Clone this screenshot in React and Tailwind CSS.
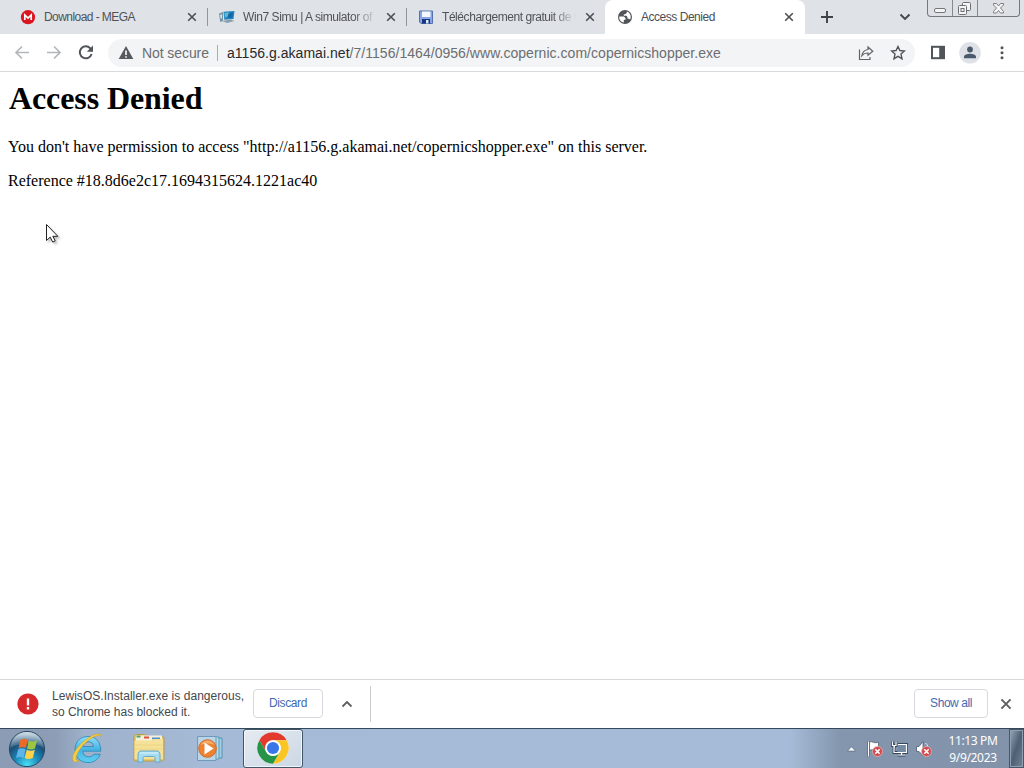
import React from "react";

const ui = "font-['Liberation_Sans',Arial,sans-serif]";

function Close({ size = 10, color = "#4c4f53", w = 1.6 }) {
  return (
    <svg width={size} height={size} viewBox="0 0 10 10" fill="none" stroke={color} strokeWidth={w} className="shrink-0">
      <path d="M1.200 1.200 8.800 8.800M8.800 1.200 1.200 8.800" />
    </svg>
  );
}

function MegaIcon() {
  return (
    <svg width="16" height="16" viewBox="0 0 16 16" className="shrink-0">
      <circle cx="8" cy="8.200" r="7.100" fill="#d9151f" />
      <path d="M4.800 11V6L8 9l3.200-3v5" fill="none" stroke="#fff" strokeWidth="1.700" />
    </svg>
  );
}

function SimuIcon() {
  return (
    <svg width="16" height="16" viewBox="0 0 16 16" className="shrink-0">
      <path d="M0 4.500 4 3v9l-2.800 1z" fill="#7895a8" />
      <path d="m1 6 2-.7v4l-1.200.5z" fill="#d0e1e8" />
      <path d="m4.500 2.800 11-.8-1 8-9.200.8z" fill="#2384bd" />
      <path d="m5.500 3.800 4-.3c2 2-1 4-3.700 5.200z" fill="#5cbad6" />
      <path d="m9 5 5-2-.7 5.600-4 .5z" fill="#1768a8" />
      <path d="m3 12 8.500-1.500 4 1.600L8 14z" fill="#8aa0ac" />
    </svg>
  );
}

function FloppyIcon() {
  return (
    <svg width="16" height="16" viewBox="0 0 16 16" className="shrink-0">
      <path d="M1.500 2h13v12.500H3L1.500 13z" fill="#86a6e6" stroke="#5571ae" />
      <path d="M4 2.500h8.500V8H4z" fill="#f3f6fb" />
      <path d="M4 10h8v4.500H4z" fill="#16377e" />
      <path d="M8 11h2.500v3.500H8z" fill="#dae8ff" />
    </svg>
  );
}

function GlobeIcon() {
  return (
    <svg width="16" height="16" viewBox="0 0 16 16" className="shrink-0">
      <circle cx="8" cy="8" r="7" fill="#515458" />
      <path d="M2.300 7.500h4.500l1.700 1.600v1.700H6.800v2.700C4 13 1.700 10.500 2.300 7.500zM9.800 2.400v1.400L8.300 5.200H6.800v1.600H9.500l1 1.500v1.500h1.800l.8 1c1.500-3.400.3-7.300-3.300-8.400z" fill="#fff" />
    </svg>
  );
}

function Tab({ icon, title, spacing, fade, sep }) {
  return (
    <div className="flex h-full w-[199px] shrink-0 items-center pl-[11px]">
      {icon}
      <div className={"ml-2 w-[134px] whitespace-nowrap text-[12px] leading-[16px] text-[#505357] " + spacing + (fade ? " [mask-image:linear-gradient(to_right,black_82%,transparent)]" : "")}>
        {title}
      </div>
      <div className="ml-auto mr-[10px] flex"><Close /></div>
      <div className={"h-[18px] w-px " + (sep ? "bg-[#91969c]" : "bg-transparent")} />
    </div>
  );
}

function WindowButtons() {
  return (
    <div className="ml-[16px] flex h-[17px] w-[93px] self-start rounded-b-[4px] border border-t-0 border-[#747980] bg-[#dde1e5]">
      <div className="flex w-[25px] justify-center border-r border-[#858a90]">
        <svg width="24" height="16" viewBox="0 0 24 16"><rect x="6.500" y="8.500" width="11" height="4" rx="1.500" fill="#f4f4f5" stroke="#73777c" /></svg>
      </div>
      <div className="flex w-[25px] justify-center border-r border-[#858a90]">
        <svg width="24" height="16" viewBox="0 0 24 16" fill="#f4f4f5" stroke="#6c7075">
          <rect x="9.500" y="2.500" width="8" height="8" rx="1" />
          <rect x="5.500" y="5.500" width="8" height="9" rx="1" />
          <rect x="8" y="8.500" width="3" height="3" />
        </svg>
      </div>
      <div className="flex flex-1 justify-center">
        <svg width="40" height="16" viewBox="0 0 40 16">
          <path d="M14.500 3.500h3l2 2.500 2-2.500h3v1.500L21.500 8l3 3.500v1.500h-3l-2-2.500-2 2.500h-3v-1.500l3-3.500-3-3z" fill="#f4f4f5" stroke="#7b7f84" />
        </svg>
      </div>
    </div>
  );
}

function TabStrip() {
  return (
    <div className="flex h-[34px] shrink-0 items-center bg-[#dfe2e6]">
      <div className="flex h-full w-[605px] shrink-0 items-center pl-[9px]">
        <Tab icon={<MegaIcon />} title="Download - MEGA" spacing="tracking-[-0.56px]" sep />
        <Tab icon={<SimuIcon />} title="Win7 Simu | A simulator of" spacing="tracking-[-0.42px]" fade sep />
        <Tab icon={<FloppyIcon />} title="Téléchargement gratuit de C" spacing="tracking-[-0.44px]" fade />
      </div>
      <div className="flex h-full w-[200px] shrink-0 items-center rounded-t-[8px] bg-white pl-[12px] pr-[11px]">
        <GlobeIcon />
        <div className="ml-2 text-[12px] leading-[16px] tracking-[-0.47px] text-[#4c4f53]">Access Denied</div>
        <div className="ml-auto flex"><Close /></div>
      </div>
      <div className="flex h-full flex-1 items-center pl-[15px]">
        <svg width="14" height="14" viewBox="0 0 14 14" stroke="#3e4145" strokeWidth="1.900"><path d="M7 1v12M1 7h12" /></svg>
        <svg width="12" height="8" viewBox="0 0 12 8" className="ml-auto" fill="none" stroke="#44474b" strokeWidth="1.900"><path d="m1.500 1.500 4.500 4.500 4.500-4.500" /></svg>
        <WindowButtons />
        <div className="w-[4px]" />
      </div>
    </div>
  );
}

function Toolbar() {
  return (
    <div className="flex h-[38px] shrink-0 items-center border-b border-[#d8dadc] bg-white pl-[14px] text-[#5a5d61]">
      <svg width="16" height="16" viewBox="0 0 16 16" fill="none" stroke="#b4b6b9" strokeWidth="1.700"><path d="M15 7.500H2M8 1.500 2 7.500l6 6" /></svg>
      <svg width="16" height="16" viewBox="0 0 16 16" className="ml-4" fill="none" stroke="#b4b6b9" strokeWidth="1.700"><path d="M1 7.500h13M8 1.500l6 6-6 6" /></svg>
      <svg width="16" height="16" viewBox="0 0 16 16" className="ml-4" fill="none" stroke="#515458" strokeWidth="2"><path d="M13.600 9A6 6 0 1 1 12.300 3.300L14 5" /><path d="M15 .5v6.200H8.800z" fill="#515458" stroke="none" /></svg>
      <div className="ml-[14px] flex h-[28px] w-[807px] items-center rounded-full bg-[#f3f4f5] pl-[10px] pr-[9px]">
        <svg width="16" height="16" viewBox="0 0 16 16"><path d="M8 1 15.300 14H.7z" fill="#56595d" /><path d="M7.200 5.500h1.600V10H7.200zM7.200 11.200h1.600v1.500H7.200z" fill="#fff" /></svg>
        <span className="ml-[8px] w-[68px] whitespace-nowrap pt-px text-[14px] leading-[18px] tracking-[-0.08px] text-[#6a6d71]">Not secure</span>
        <div className="ml-[7px] h-[16px] w-px bg-[#a9acb0]" />
        <span className="ml-[9px] whitespace-nowrap pt-px text-[14px] leading-[18px] tracking-[0.035px] text-[#6b6e72]"><span className="text-[#282a2d]">a1156.g.akamai.net</span>/7/1156/1464/0956/www.copernic.com/copernicshopper.exe</span>
        <svg width="16" height="16" viewBox="0 0 16 16" className="ml-auto" fill="none" stroke="#606367" strokeWidth="1.200">
          <path d="M1.500 4.500v10H12V12" /><path d="M10 2 14.800 6.200 10 10.300V8C7.200 7.900 5.300 8.800 3.900 10.500 4.500 7 6.500 4.900 10 4.500z" />
        </svg>
        <svg width="16" height="16" viewBox="0 0 16 16" className="ml-4" fill="none" stroke="#515458" strokeWidth="1.400"><path d="m8 1.500 1.900 4 4.600.5L11 9.100l1 4.600-4-2.400-4 2.400 1-4.600L1.500 6l4.600-.5z" /></svg>
      </div>
      <svg width="16" height="16" viewBox="0 0 16 16" className="ml-[15px]"><path d="M1 .8h14v13.400H1z" fill="#515458" /><path d="M3 2.800h6.200v9.400H3z" fill="#fff" /></svg>
      <svg width="22" height="22" viewBox="0 0 22 22" className="ml-[13px]"><circle cx="11" cy="10.800" r="10.800" fill="#dee2e7" /><circle cx="11" cy="7.500" r="2.900" fill="#4c596c" /><path d="M5 16.200v-1.500c0-2 3-3 6-3s6 1 6 3v1.500z" fill="#4c596c" /></svg>
      <svg width="4" height="16" viewBox="0 0 4 16" className="ml-[19px]" fill="#515458"><circle cx="2" cy="2.800" r="1.500" /><circle cx="2" cy="7.800" r="1.500" /><circle cx="2" cy="12.800" r="1.500" /></svg>
    </div>
  );
}

function Page() {
  return (
    <main className="relative flex-1 bg-white px-2 font-['Liberation_Serif','Times_New_Roman',serif] text-[16px] leading-[18px] text-black">
      <h1 className="pl-px pt-[8px] text-[32px] font-bold leading-[36px] tracking-[-0.1px]">Access Denied</h1>
      <p className="mt-[22px] whitespace-nowrap">You don't have permission to access "http://a1156.g.akamai.net/copernicshopper.exe" on this server.</p>
      <p className="mt-4">Reference #18.8d6e2c17.1694315624.1221ac40</p>
      <svg width="18" height="24" viewBox="0 0 18 24" className="absolute left-[45px] top-[151px] drop-shadow-[2px_2px_1px_rgba(0,0,0,0.25)]">
        <path d="M1.500 1.500v16l3.700-3.400 2.500 5 2.500-1.200-2.400-4.600h5z" fill="#fff" stroke="#222" />
      </svg>
    </main>
  );
}

function DownloadBar() {
  return (
    <div className="flex h-[49px] shrink-0 items-center border-t border-[#d5d7da] bg-white pl-[17px] text-[12px]">
      <svg width="22" height="22" viewBox="0 0 22 22"><circle cx="11" cy="11" r="10.600" fill="#d6292b" /><path d="M9.800 5.500h2.400v7H9.800zM9.800 14h2.400v2.400H9.800z" fill="#fff" /></svg>
      <div className="ml-[13px] w-[201px] whitespace-nowrap leading-[16px] text-[#45484c]">
        <div className="tracking-[0.04px]">LewisOS.Installer.exe is dangerous,</div>
        <div className="tracking-[-0.02px]">so Chrome has blocked it.</div>
      </div>
      <div className="mb-[2px] flex h-[29px] w-[70px] items-center justify-center rounded-[4px] border border-[#d6d9dd] pb-px tracking-[-0.38px] text-[#426bb2]">Discard</div>
      <svg width="12" height="8" viewBox="0 0 12 8" className="ml-[18px]" fill="none" stroke="#5c5f63" strokeWidth="1.800"><path d="m1.500 6.500 4.500-4.500 4.500 4.500" /></svg>
      <div className="ml-[17px] h-[36px] w-px bg-[#cbced1]" />
      <div className="mb-[2px] ml-auto flex h-[29px] w-[74px] items-center justify-center rounded-[4px] border border-[#d6d9dd] pb-px tracking-[-0.45px] text-[#426bb2]">Show all</div>
      <div className="mb-px ml-[12px] mr-[12px] flex"><Close size={12} color="#5b5e62" w={1.6} /></div>
    </div>
  );
}

function StartOrb() {
  return (
    <svg width="38" height="38" viewBox="0 0 38 38">
      <defs>
        <radialGradient id="orb" cx="50%" cy="95%" r="85%"><stop offset="0" stopColor="#4be0f6" /><stop offset=".4" stopColor="#1d8bbb" /><stop offset=".75" stopColor="#1b4f78" /><stop offset="1" stopColor="#8da7b9" /></radialGradient>
        <linearGradient id="shine" x2="0" y2="1"><stop stopColor="#e2edf4" stopOpacity=".8" /><stop offset="1" stopColor="#7394ad" stopOpacity=".25" /></linearGradient>
      </defs>
      <circle cx="19" cy="19" r="17.600" fill="url(#orb)" stroke="#294b67" />
      <path d="M3 17C4 7 11 2 19 2s15 5 16 15c-8-3-20-4-32 0z" fill="url(#shine)" />
      <path d="M12.300 10c3-1.700 5.500-1.300 7.400-.3L17.900 18c-2.500-1.200-4.900-1-7.300.1z" fill="#ea6a2a" />
      <path d="M20.800 10.500c2.500 1.500 5.200 1.300 8.200-.2l-2 8.200c-3 1.400-5.700 1.300-8 0z" fill="#9cc63f" />
      <path d="M10.200 19.300c2.500-1.300 5-1.200 7.400 0L15.500 28c-2.200-1.500-4.800-1.400-7.500-.1z" fill="#5db4ea" />
      <path d="M18.700 19.700c2.500 1.400 5.100 1.500 8.100.1l-2 8.100c-2.900 1.500-5.700 1.400-8.100.2z" fill="#fbd24a" />
    </svg>
  );
}

function IEIcon() {
  return (
    <svg width="34" height="34" viewBox="0 0 34 34">
      <defs><linearGradient id="ieb" x2="0" y2="1"><stop stopColor="#8fe0fa" /><stop offset=".5" stopColor="#45b3e4" /><stop offset="1" stopColor="#5fd0f3" /></linearGradient></defs>
      <path fillRule="evenodd" d="M18 4.500c8 0 13 5.500 12.700 14.700H12.800c.4 3.800 2.400 5.600 5.900 5.600 2.300 0 4-.8 5-2.600h6.600C28.300 27.500 24 30.500 18 30.500 10 30.500 5 25 5 17.500S10 4.500 18 4.500zm-5 10h10.500c-.5-3.300-2.200-4.800-5.200-4.800S13.500 11.200 13 14.500z" fill="url(#ieb)" stroke="#2a85b4" strokeWidth=".8" />
      <path d="M31.500 4.500C32 1.500 27.500 1 21.500 4 11 9.500 1 21.500 3 28c1 2.700 4 2.200 6.500.5-2.500.5-3.700-.4-3.400-2.700C7.300 18.500 16 8.500 24.500 4.600c3.500-1.500 6-1.600 7-.1z" fill="#f5cf3c" stroke="#c49b35" strokeWidth=".5" />
    </svg>
  );
}

function FolderIcon() {
  return (
    <svg width="34" height="32" viewBox="0 0 34 32">
      <path d="M2 4c0-2 1-2.500 2.500-2.500H13l2 2h14c2 0 3 .8 3 2.500v20c0 1.500-1 2-2.500 2H4c-1.500 0-2-.7-2-2z" fill="#e7ca70" stroke="#b99b4b" />
      <path d="M4 2.500h26V8H4z" fill="#f6f0d8" />
      <path d="M4.500 2.500h4v2h-4z" fill="#4da760" /><path d="M12 3.500h5v2h-5z" fill="#d65045" /><path d="M20 4.500h8v2h-8z" fill="#4e90ca" />
      <path d="M2.500 7.500H19l2-1.500h10v20H2.500z" fill="#f5e197" />
      <path d="M3 12h28M3 16h28" stroke="#ecd480" />
      <path d="M6 29v-7c0-2.500 1-4 3-4h16c2 0 3 1.500 3 4v7h-5v-4c0-1-.5-1.500-1.500-1.500h-9c-1 0-1.500.5-1.500 1.500v4z" fill="#a5dcf2" stroke="#65a8ca" />
      <path d="M8 20h18" stroke="#dff6ff" />
    </svg>
  );
}

function PlayerIcon() {
  return (
    <svg width="28" height="28" viewBox="0 0 28 28">
      <path d="M8 3h18v20H8z" fill="#a5cfe0" stroke="#5496b3" /><path d="M6 2h17v22H6z" fill="#b4dae8" stroke="#5b9dbb" />
      <path d="M1.500 1.500h18.500v24H1.500z" fill="#b9d5e8" stroke="#7099bb" />
      <circle cx="11.500" cy="13.500" r="8.800" fill="#ed8330" stroke="#d46a2a" /><path d="M4.500 10c2-6 12-6 14 0-5-2-9-2-14 0z" fill="#f6ac66" />
      <path d="M8.500 7.500v12l9-6z" fill="#fff" />
    </svg>
  );
}

function ChromeIcon() {
  return (
    <svg width="32" height="32" viewBox="0 0 32 32">
      <circle cx="16" cy="16" r="15.700" fill="#fff" />
      <path d="M2.400 8.150A15.700 15.700 0 0 1 29.600 8.150H16A7.850 7.850 0 0 0 9.200 19.930z" fill="#e23b2e" />
      <path d="M29.600 8.150A15.700 15.700 0 0 1 16 31.700L22.800 19.930A7.850 7.850 0 0 0 16 8.150z" fill="#fbc624" />
      <path d="M16 31.700A15.700 15.700 0 0 1 2.400 8.150L9.200 19.930A7.850 7.850 0 0 0 22.800 19.930z" fill="#259447" />
      <circle cx="16" cy="16" r="7.700" fill="#fff" /><circle cx="16" cy="16" r="6.100" fill="#3977e8" />
    </svg>
  );
}

function ErrorBadge({ x }) {
  return <g><circle cx={x} cy="11.500" r="5" fill="#d24b4f" stroke="#eeb6b8" strokeWidth=".7" /><path d={`M${x - 2.2} 9.300l4.400 4.400m0-4.400-4.400 4.400`} stroke="#fff" strokeWidth="1.600" /></g>;
}

function NetworkLines({ color, w }) {
  return <path d="M7 4.500h8.500v8H6M10.500 13v2M6.500 15h8M3 6v6.500h3M1.500 1.500v4h3.500v-4M3.250 6v2" stroke={color} strokeWidth={w} />;
}

function Taskbar() {
  return (
    <div className="flex h-[40px] shrink-0 items-center border-t border-[#34485c] bg-[linear-gradient(to_right,#8b9cb4_0px,#8c9db5_55px,#9fb1cb_85px,#a5bad6_200px,#a6bbd7_790px,#8496ae_840px,#8192a9_1024px)] pl-[8px]">
      <StartOrb />
      <div className="ml-[24px] flex"><IEIcon /></div>
      <div className="ml-[28px] flex"><FolderIcon /></div>
      <div className="ml-[30px] flex"><PlayerIcon /></div>
      <div className="ml-[19px] flex h-[39px] w-[60px] items-center justify-center rounded-[3px] border border-[#42566a] bg-linear-to-br from-[#e6ebf1] to-[#cbd7e5] pb-px shadow-[inset_0_0_0_1px_#f2f6fa]"><ChromeIcon /></div>
      <div className="ml-auto flex items-center">
        <svg width="9" height="6" viewBox="0 0 9 6"><path d="M.5 5 4.500.8 8.500 5z" fill="#fff" stroke="#4c5f76" strokeWidth=".6" /></svg>
        <svg width="18" height="18" viewBox="0 0 18 18" className="ml-[10px]"><path d="M2.500 1.500v15" stroke="#39485a" strokeWidth="3" /><path d="M2.500 1.500v15" stroke="#fff" strokeWidth="1.500" /><path d="M3.500 2c3-1 4 1 6 .7 2 0 3-.5 3-.5v8c-3 1-4-.5-6-.5l-3 .4z" fill="#fff" stroke="#45546a" strokeWidth=".7" /><ErrorBadge x={11.500} /></svg>
        <svg width="18" height="18" viewBox="0 0 18 18" className="ml-[7px]" fill="none"><NetworkLines color="#35475c" w="2.800" /><path d="M7 4.500h8.500v8H6.500z" fill="#758ba5" /><NetworkLines color="#fff" w="1.200" /></svg>
        <svg width="18" height="18" viewBox="0 0 18 18" className="ml-[6px]"><path d="M1.500 6.500h2.500l4-5v14l-4-4h-2.500z" fill="#fff" stroke="#4b5c72" strokeWidth=".8" /><path d="M10.500 3q2 1.500 2.300 3.500" fill="none" stroke="#e9eff5" /><ErrorBadge x={11.500} /></svg>
        <div className="ml-[14px] w-[52px] whitespace-nowrap text-center font-['Noto_Sans',sans-serif] text-[12px] leading-[17px] tracking-[-0.35px] text-white"><div>11:13 PM</div><div>9/9/2023</div></div>
      </div>
      <div className="ml-[10px] h-[39px] w-[15px] border border-[#455768] bg-linear-to-br from-[#95a7b8] via-[#4d6073] to-[#718598] shadow-[inset_0_0_0_1px_#8e9faf]" />
    </div>
  );
}

export default function App() {
  return <div className={"flex h-[768px] w-[1024px] flex-col overflow-hidden bg-white " + ui}><TabStrip /><Toolbar /><Page /><DownloadBar /><Taskbar /></div>;
}
